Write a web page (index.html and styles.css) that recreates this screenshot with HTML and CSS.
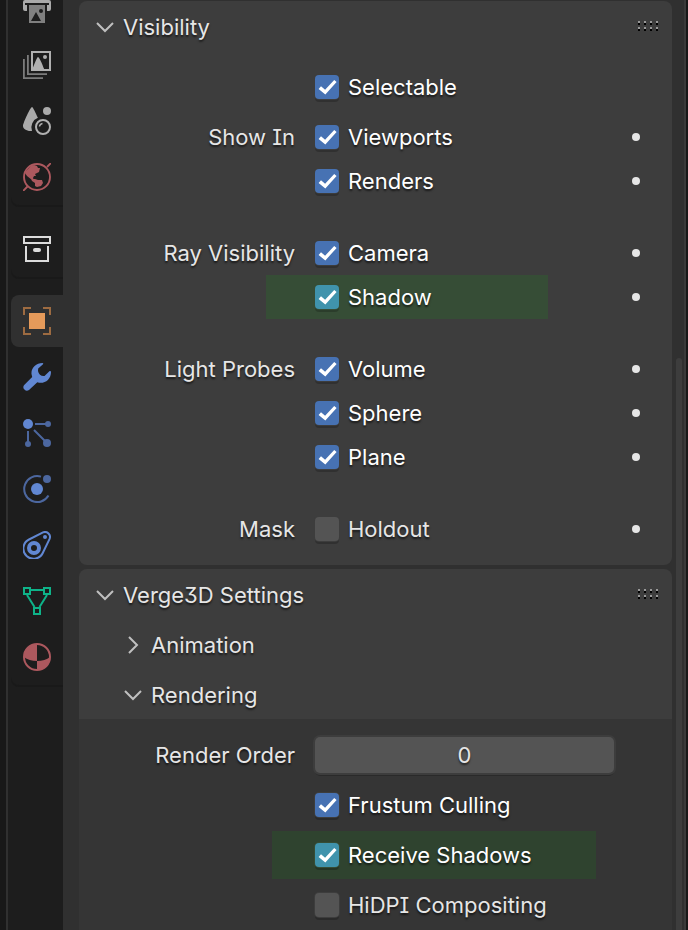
FILE: index.html
```html
<!DOCTYPE html>
<html lang="en">
<head>
<meta charset="utf-8">
<title>Object Properties</title>
<link rel="stylesheet" href="styles.css">
</head>
<body>
<div class="editor">
  <nav class="tabs" aria-label="Property tabs">
    <div class="tab-group">
      <button class="tab" aria-label="Output"><svg viewBox="0 0 28 28"><path fill="#aaa" d="M4 0h20v5H4zM2 5h24a2 2 0 0 1 2 2v7a2 2 0 0 1-2 2h-2V10H4v6H2a2 2 0 0 1-2-2V7a2 2 0 0 1 2-2z"/><path fill="#808080" d="M6 10h16v18H6z"/><path fill="#1d1d1d" d="M2 8h24v2H2zM8 26l5-9 5 9z"/><circle cx="18" cy="16" r="2" fill="#1d1d1d"/></svg></button>
      <button class="tab" aria-label="View Layer"><svg viewBox="0 0 28 28"><path fill="none" stroke="#7c7c7c" stroke-width="1.800" d="M4.900 4v19.100H24M.9 8v19.100H20"/><rect x="9" y="1" width="18" height="18" fill="none" stroke="#b0b0b0" stroke-width="2"/><path fill="#b0b0b0" d="M9 19C11.500 13 14 6 15 6s3.500 5 6.500 13z"/><circle cx="22" cy="6" r="2" fill="#b0b0b0"/></svg></button>
      <button class="tab" aria-label="Scene"><svg viewBox="0 0 28 28"><path fill="#aaa" d="M9 0c1 0 3.500 6 5.900 10.800A10.200 10.200 0 0 0 9 23.900C4 24.500 0 22 0 19 0 16 7.500 0 9 0z"/><circle cx="24" cy="4" r="4" fill="#aaa"/><circle cx="20" cy="20" r="7" fill="none" stroke="#b0b0b0" stroke-width="2"/><path fill="none" stroke="#b0b0b0" stroke-width="1.500" d="M16.500 19.500a3.500 3.500 0 0 1 3-3"/></svg></button>
      <button class="tab" aria-label="World"><svg viewBox="0 0 28 28"><g fill="none" stroke="#ac585e" stroke-width="1.900"><circle cx="14" cy="14" r="13"/><path d="M24 4l4-4M0 28l4.500-4.500"/></g><path fill="#ac585e" d="M3 8L8 3l3-1 3 1 1 2h2l-1 4-4 2 1 2h-2l-1 2 1 2h-2l-5-4-2-3zM8 16h4l3 1h4l1 3-2 3-4 1-2-1v-3l-3-2z"/></svg></button>
    </div>
    <div class="tab-group">
      <button class="tab" aria-label="Collection"><svg viewBox="0 0 28 28"><path fill="none" stroke="#dcdcdc" stroke-width="2" d="M1 2h26v6H1zM3 11v15h22V11"/><rect x="10" y="13" width="8" height="4" rx="2" fill="#dcdcdc"/></svg></button>
    </div>
    <div class="tab-group">
      <button class="tab tab-active" aria-label="Object"><svg viewBox="0 0 28 28"><path fill="none" stroke="#9d6b41" stroke-width="2" d="M1 8V1h7M20 1h7v7M27 20v7h-7M8 27H1v-7"/><path fill="#e59a5a" d="M6 6h16v16H6z"/></svg></button>
      <button class="tab" aria-label="Modifiers"><svg viewBox="0 0 28 28"><path fill="#6187d2" d="M19.500 0C13 0 8 5 8.500 11l.7 3L1.200 22A3.500 3.500 0 0 0 6 27l8.300-7.700C21 21.500 28 17 28 9c0-1-.9-1.400-1.600-.7L21.500 13c-3 .5-6-1.500-6.500-5l.2-2.500L20 1.200c.5-.6.300-1.200-.5-1.200z"/></svg></button>
      <button class="tab" aria-label="Particles"><svg viewBox="0 0 28 28"><path fill="none" stroke="#4c679f" stroke-width="2" d="M12 5h12M5 12v12M11 11l12 12"/><g fill="#4c679f"><circle cx="25" cy="5" r="3"/><circle cx="5" cy="25" r="3"/><circle cx="24" cy="24" r="4"/></g><circle cx="5" cy="5" r="5" fill="#6187d2"/></svg></button>
      <button class="tab" aria-label="Physics"><svg viewBox="0 0 28 28"><path fill="none" stroke="#4c679f" stroke-width="2" d="M18 1.600A13 13 0 1 0 25.500 20.500"/><circle cx="24" cy="4" r="4" fill="#4c679f"/><circle cx="14" cy="14" r="6" fill="#6187d2"/></svg></button>
      <button class="tab" aria-label="Object Constraints"><svg viewBox="0 0 28 28"><path fill="none" stroke="#6187d2" stroke-width="2" d="M6 8.500L20 1.400a5 5 0 0 1 6.600 6.500L20 21.500A10.200 10.200 0 1 1 6 8.500z"/><circle cx="11" cy="17" r="5" fill="none" stroke="#6187d2" stroke-width="4"/><circle cx="22" cy="6" r="2" fill="#6187d2"/></svg></button>
      <button class="tab" aria-label="Object Data"><svg viewBox="0 0 28 28"><path fill="none" stroke="#0eb389" stroke-width="2" d="M1 1h6v6H1zM21 1h6v6h-6zM11 21h6v6h-6zM8 3h12M4 8l7.500 12M24 8l-7.500 12"/></svg></button>
      <button class="tab" aria-label="Material"><svg viewBox="0 0 28 28"><circle cx="14" cy="14" r="13" fill="none" stroke="#ac585e" stroke-width="2"/><path fill="#ac585e" d="M14 1v17C9 18 4 16.800 1 14A13 13 0 0 1 14 1zM14 18c5 0 10-1.200 13-4a13 13 0 0 1-13 13z"/></svg></button>
    </div>
  </nav>

  <main class="properties">
    <section class="panel">
      <h2 class="panel-title">
        <button class="toggle" aria-expanded="true"><svg class="chevron" viewBox="0 0 18 18"><path d="M1 5l8 8 8-8"/></svg>Visibility</button>
        <svg class="grip" viewBox="0 0 20 10"><path fill="#999" d="M0 0h2v2H0zM6 0h2v2H6zM12 0h2v2h-2zM18 0h2v2h-2zM0 6h2v2H0zM6 6h2v2H6zM12 6h2v2h-2zM18 6h2v2h-2z"/><path fill="#000" d="M0 2h2v2H0zM6 2h2v2H6zM12 2h2v2h-2zM18 2h2v2h-2zM0 8h2v2H0zM6 8h2v2H6zM12 8h2v2h-2zM18 8h2v2h-2z"/></svg>
      </h2>
      <div class="panel-body">
        <div class="rows lead">
          <div class="row"><label class="check"><input type="checkbox" checked><span>Selectable</span></label></div>
        </div>
        <div class="rows">
          <div class="row"><span class="name">Show In</span><label class="check"><input type="checkbox" checked><span>Viewports</span></label><button class="dot" aria-label="Animate Viewports"></button></div>
          <div class="row"><label class="check"><input type="checkbox" checked><span>Renders</span></label><button class="dot" aria-label="Animate Renders"></button></div>
        </div>
        <div class="rows">
          <div class="row"><span class="name">Ray Visibility</span><label class="check"><input type="checkbox" checked><span>Camera</span></label><button class="dot" aria-label="Animate Camera"></button></div>
          <div class="row"><label class="check marked"><input type="checkbox" checked><span>Shadow</span></label><button class="dot" aria-label="Animate Shadow"></button></div>
        </div>
        <div class="rows">
          <div class="row"><span class="name">Light Probes</span><label class="check"><input type="checkbox" checked><span>Volume</span></label><button class="dot" aria-label="Animate Volume"></button></div>
          <div class="row"><label class="check"><input type="checkbox" checked><span>Sphere</span></label><button class="dot" aria-label="Animate Sphere"></button></div>
          <div class="row"><label class="check"><input type="checkbox" checked><span>Plane</span></label><button class="dot" aria-label="Animate Plane"></button></div>
        </div>
        <div class="rows">
          <div class="row"><span class="name">Mask</span><label class="check"><input type="checkbox"><span>Holdout</span></label><button class="dot" aria-label="Animate Holdout"></button></div>
        </div>
      </div>
    </section>

    <section class="panel">
      <h2 class="panel-title">
        <button class="toggle" aria-expanded="true"><svg class="chevron" viewBox="0 0 18 18"><path d="M1 5l8 8 8-8"/></svg>Verge3D Settings</button>
        <svg class="grip" viewBox="0 0 20 10"><path fill="#999" d="M0 0h2v2H0zM6 0h2v2H6zM12 0h2v2h-2zM18 0h2v2h-2zM0 6h2v2H0zM6 6h2v2H6zM12 6h2v2h-2zM18 6h2v2h-2z"/><path fill="#000" d="M0 2h2v2H0zM6 2h2v2H6zM12 2h2v2h-2zM18 2h2v2h-2zM0 8h2v2H0zM6 8h2v2H6zM12 8h2v2h-2zM18 8h2v2h-2z"/></svg>
      </h2>
      <h3 class="panel-title sub"><button class="toggle" aria-expanded="false"><svg class="chevron" viewBox="0 0 18 18"><path d="M5 1l8 8-8 8"/></svg>Animation</button></h3>
      <h3 class="panel-title sub"><button class="toggle" aria-expanded="true"><svg class="chevron" viewBox="0 0 18 18"><path d="M1 5l8 8 8-8"/></svg>Rendering</button></h3>
      <div class="subpanel">
        <div class="row"><label class="name" for="render-order">Render Order</label><input class="number" id="render-order" type="text" inputmode="numeric" value="0"></div>
        <div class="row"><label class="check"><input type="checkbox" checked><span>Frustum Culling</span></label></div>
        <div class="row"><label class="check marked marked-wide"><input type="checkbox" checked><span>Receive Shadows</span></label></div>
        <div class="row"><label class="check"><input type="checkbox"><span>HiDPI Compositing</span></label></div>
      </div>
    </section>
  </main>
  <div class="scroll"><div class="thumb"></div></div>
</div>
</body>
</html>
```
FILE: styles.css
```css
* {
  box-sizing: border-box;
}

body {
  margin: 0;
  height: 100vh;
  overflow: hidden;
  background: #181818;
  color: #e6e6e6;
  font: 22px/28px Inter, "Liberation Sans", sans-serif;
  font-feature-settings: "cv08", "cv09";
  font-optical-sizing: none;
}

button,
input {
  margin: 0;
  padding: 0;
  border: 0;
  background: none;
  color: inherit;
  font: inherit;
  font-feature-settings: inherit;
  font-optical-sizing: inherit;
  text-shadow: inherit;
}

.editor {
  display: flex;
  height: 100%;
  margin: 0 2px 0 6px;
  border: solid #303030;
  border-width: 0 2px;
  border-right-color: #3a3a3a;
  background: #303030;
  overflow: hidden;
}

/* Tab strip, scrolled part of the way past its first tab */
.tabs {
  display: flex;
  flex: none;
  flex-direction: column;
  gap: 16px;
  width: 55px;
  padding-left: 3px;
  background: #1d1d1d;
}

.tab-group {
  display: flex;
  flex-direction: column;
  border-radius: 0 0 0 8px;
  box-shadow: 0 2px 0 #191919;
}

.tab-group:first-child {
  margin-top: -19px;
}

.tab {
  display: flex;
  align-items: center;
  height: 52px;
  margin: 2px 0;
  padding-left: 12px;
  border-radius: 8px 0 0 8px;
}

.tab svg {
  width: 28px;
  height: 28px;
}

.tab-active {
  background: #303030;
}

.properties {
  flex: 1;
  min-width: 0;
  padding: 1px 0 0 16px;
  text-shadow: 0 2px 2px rgba(0, 0, 0, 0.6);
}

.panel {
  margin-bottom: 4px;
  padding-top: 1px;
  border-radius: 8px;
  background: #3d3d3d;
}

.panel-title {
  display: flex;
  align-items: center;
  justify-content: space-between;
  height: 50px;
  margin: 0;
  padding: 0 14px 0 17px;
  font-size: 22px;
  font-weight: 400;
}

.sub {
  padding-left: 45px;
}

.sub:last-of-type {
  height: 49px;
}

.toggle {
  display: flex;
  align-items: center;
  gap: 9px;
}

.chevron {
  width: 18px;
  height: 18px;
  fill: none;
  stroke: #c0c0c0;
  stroke-width: 2;
}

.grip {
  width: 20px;
  height: 10px;
  margin-bottom: 2px;
}

.panel-body {
  display: flex;
  flex-direction: column;
  gap: 28px;
  padding: 13px 0 14px;
}

.lead {
  margin-bottom: -22px;
}

.row {
  display: grid;
  grid-template-columns: 216px 1fr 44px;
  align-items: center;
  height: 44px;
  padding-right: 14px;
}

.name {
  text-align: right;
}

.check {
  display: flex;
  grid-column: 2;
  align-items: center;
  justify-self: start;
  gap: 9px;
  height: 44px;
  margin-left: 20px;
}

.check input {
  appearance: none;
  width: 24px;
  height: 24px;
  border-radius: 4px;
  background: #545454;
  box-shadow: 0 0 0 1px #3d3d3d, 0 3px 0 rgba(0, 0, 0, 0.2);
}

.check input:checked {
  background: #4772b3;
}

.check input:checked::before {
  content: "";
  display: block;
  height: 24px;
  background: #fff;
  clip-path: polygon(15% 58%, 25% 47%, 42% 61%, 80% 21%, 90% 29%, 43% 81%);
}

.check input:checked + span {
  color: #fff;
}

.marked {
  width: 282px;
  margin-left: -29px;
  padding-left: 49px;
  background: #364d36;
}

.marked input:checked {
  background: #4093ac;
  box-shadow: 0 0 0 1px #364d36, 0 3px 0 rgba(0, 0, 0, 0.2);
}

.marked-wide {
  width: 324px;
  height: 48px;
  margin-left: -23px;
  padding-left: 43px;
  background: #2f432f;
}

.dot {
  grid-column: 3;
  justify-self: center;
  width: 8px;
  height: 8px;
  border-radius: 50%;
  background: #e6e6e6;
}

.subpanel {
  padding: 11px 0;
  background: #353535;
}

.subpanel .row {
  height: 50px;
}

.number {
  width: calc(100% - 20px);
  height: 36px;
  margin-left: 20px;
  border-radius: 5px;
  background: #545454;
  box-shadow: 0 0 0 2px #3d3d3d, 0 3px 0 rgba(0, 0, 0, 0.2);
  text-align: center;
}

.scroll {
  display: flex;
  flex: none;
  width: 12px;
  padding: 358px 2px 0 4px;
}

.thumb {
  flex: 1;
  border-radius: 3px 3px 0 0;
  background: #3d3d3d;
}
```
